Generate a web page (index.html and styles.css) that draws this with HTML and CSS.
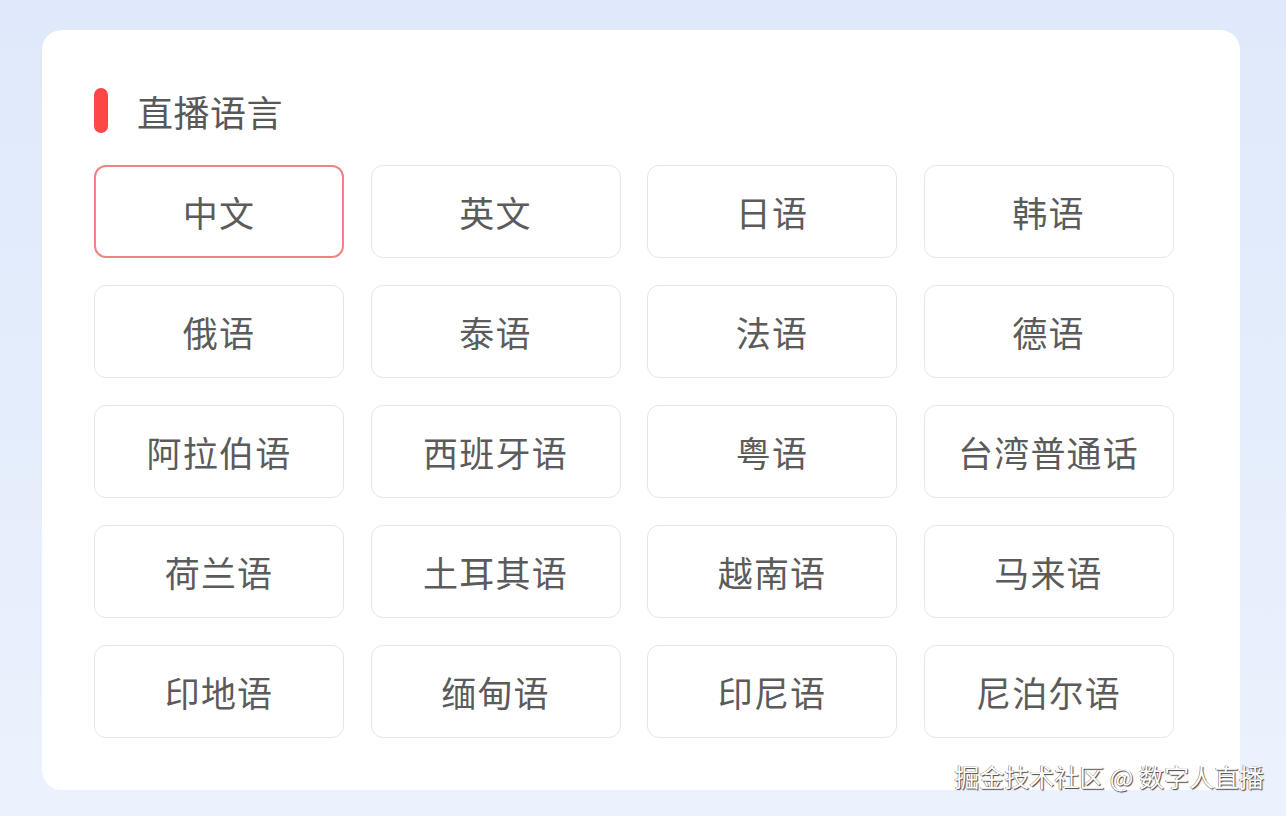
FILE: index.html
```html
<!DOCTYPE html>
<html lang="zh">
<head>
<meta charset="utf-8">
<link rel="stylesheet" href="styles.css">
</head>
<body>
<div class="page">
  <section class="card">
    <h2 class="title"><span class="bar"></span>直播语言</h2>
    <div class="grid">
      <div class="opt active">中文</div>
      <div class="opt">英文</div>
      <div class="opt">日语</div>
      <div class="opt">韩语</div>
      <div class="opt">俄语</div>
      <div class="opt">泰语</div>
      <div class="opt">法语</div>
      <div class="opt">德语</div>
      <div class="opt">阿拉伯语</div>
      <div class="opt">西班牙语</div>
      <div class="opt">粤语</div>
      <div class="opt">台湾普通话</div>
      <div class="opt">荷兰语</div>
      <div class="opt">土耳其语</div>
      <div class="opt">越南语</div>
      <div class="opt">马来语</div>
      <div class="opt">印地语</div>
      <div class="opt">缅甸语</div>
      <div class="opt">印尼语</div>
      <div class="opt">尼泊尔语</div>
    </div>
  </section>
  <div class="watermark">掘金技术社区 @ 数字人直播</div>
</div>
</body>
</html>
```
FILE: styles.css
```css
html, body {
  margin: 0;
  padding: 0;
}
body {
  width: 1286px;
  height: 816px;
  overflow: hidden;
  background: linear-gradient(180deg, #dfe9fb 0%, #e6eefc 60%, #ecf2fd 100%);
  font-family: "Noto Sans CJK SC", "Noto Sans", sans-serif;
}
.page {
  position: relative;
  width: 1286px;
  height: 816px;
  padding: 30px 0 0 42px;
  box-sizing: border-box;
}
.card {
  width: 1198px;
  height: 760px;
  box-sizing: border-box;
  background: #ffffff;
  border-radius: 20px;
  padding: 58px 0 0 52px;
}
.title {
  display: flex;
  align-items: center;
  margin: 0;
  height: 45px;
  font-size: 36px;
  font-weight: 400;
  color: #585858;
  letter-spacing: 0.5px;
}
.bar {
  width: 14px;
  height: 45px;
  border-radius: 7px;
  background: #fd4646;
  margin-right: 29px;
}
.grid {
  margin-top: 32px;
  display: grid;
  grid-template-columns: repeat(4, 250px);
  grid-auto-rows: 93px;
  column-gap: 26.5px;
  row-gap: 27px;
}
.opt {
  display: flex;
  align-items: center;
  justify-content: center;
  box-sizing: border-box;
  border: 1.5px solid #e6e6e6;
  border-radius: 12px;
  font-size: 35px;
  color: #5b5b5b;
  letter-spacing: 1.2px;
}
.opt.active {
  border: 2px solid #f08282;
}
.watermark {
  position: absolute;
  right: 22px;
  bottom: 22px;
  font-size: 25px;
  color: #ffffff;
  text-shadow: 1px 1px 1px #444, -0.5px -0.5px 0.5px #666;
  white-space: nowrap;
}
```
